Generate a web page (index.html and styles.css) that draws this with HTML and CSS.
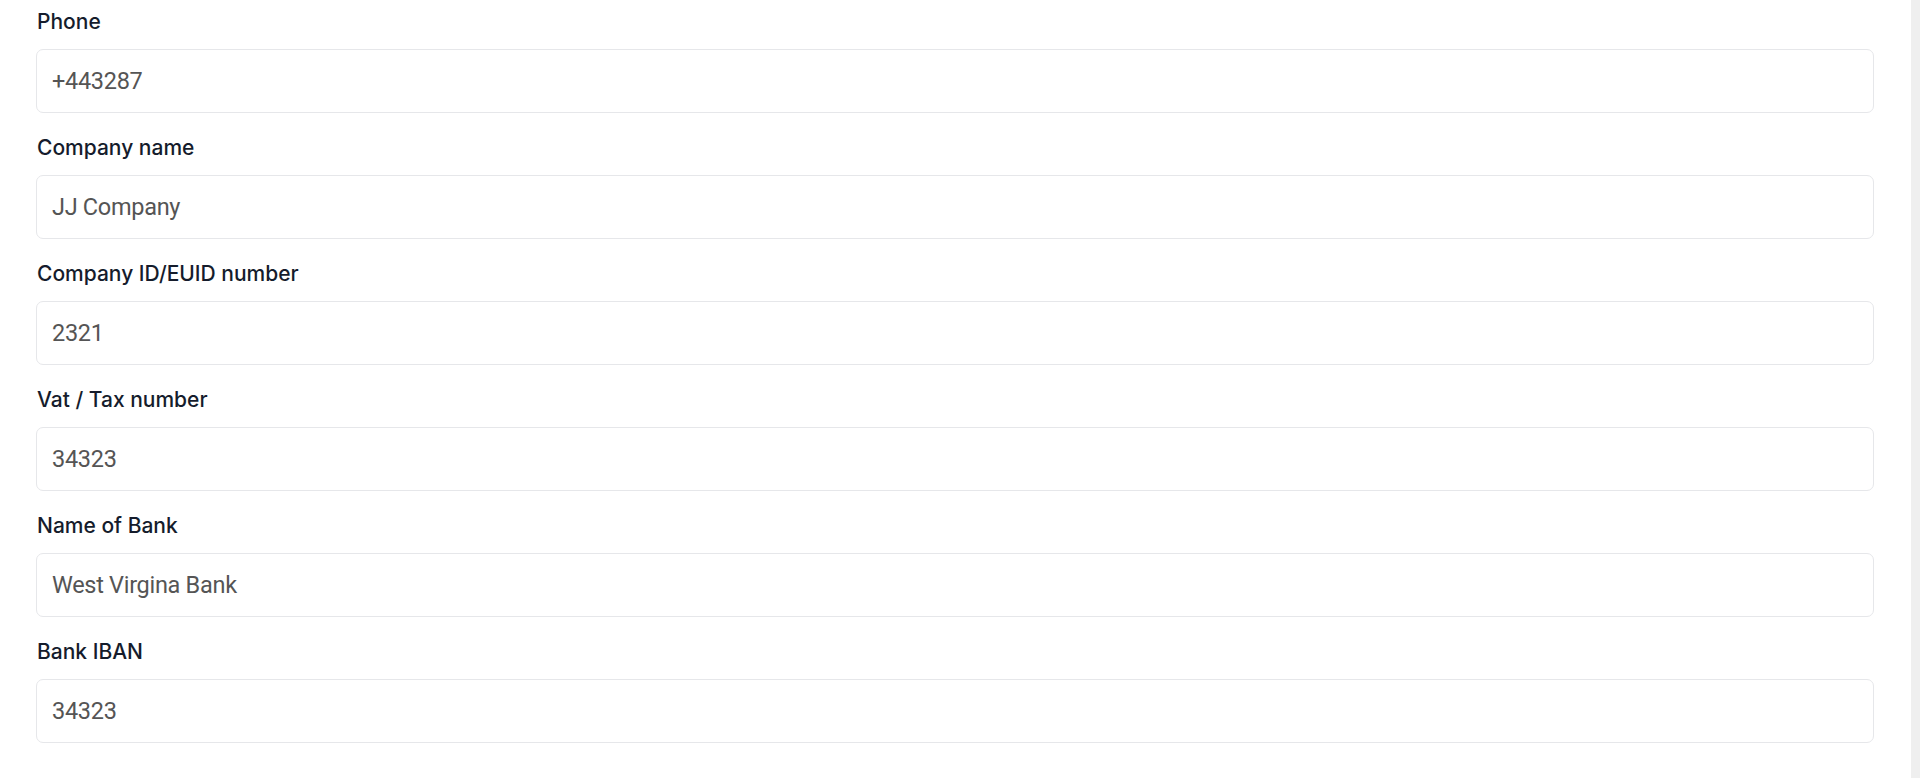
FILE: index.html
```html
<!DOCTYPE html>
<html lang="en">
<head>
<meta charset="utf-8">
<title>Company details</title>
<link rel="stylesheet" href="styles.css">
</head>
<body>
<div class="page">
  <main class="form">
    <div class="field">
      <label class="label" for="phone">Phone</label>
      <input class="input" id="phone" type="text" value="+443287">
    </div>
    <div class="field">
      <label class="label" for="company">Company name</label>
      <input class="input" id="company" type="text" value="JJ Company">
    </div>
    <div class="field">
      <label class="label" for="cid">Company ID/EUID number</label>
      <input class="input" id="cid" type="text" value="2321">
    </div>
    <div class="field">
      <label class="label" for="vat">Vat / Tax number</label>
      <input class="input" id="vat" type="text" value="34323">
    </div>
    <div class="field">
      <label class="label" for="bank">Name of Bank</label>
      <input class="input" id="bank" type="text" value="West Virgina Bank">
    </div>
    <div class="field">
      <label class="label" for="iban">Bank IBAN</label>
      <input class="input" id="iban" type="text" value="34323">
    </div>
  </main>
  <aside class="strip"></aside>
</div>
</body>
</html>
```
FILE: styles.css
```css
html, body {
  margin: 0;
  padding: 0;
  background: #ffffff;
}
body {
  font-family: Inter, "Liberation Sans", Arial, sans-serif;
  overflow: hidden;
}
.page {
  display: flex;
  width: 1920px;
  height: 778px;
}
.form {
  flex: 1;
  padding: 7px 37px 0 36px;
  display: flex;
  flex-direction: column;
  gap: 20px;
}
.strip {
  width: 9px;
  background: #efefef;
}
.field {
  display: flex;
  flex-direction: column;
}
.label {
  font-family: Inter, "Liberation Sans", Arial, sans-serif;
  font-size: 21px;
  line-height: 30px;
  font-weight: 500;
  color: #151c2c;
  padding-left: 1px;
  margin-bottom: 12px;
}
.input {
  box-sizing: border-box;
  height: 64px;
  width: 100%;
  border: 1.5px solid #e6e7ea;
  border-radius: 7px;
  background: #ffffff;
  padding: 0 15px;
  font-family: Roboto, "Liberation Sans", Arial, sans-serif;
  font-size: 23.5px;
  letter-spacing: -0.3px;
  color: #555555;
  outline: none;
}
```
